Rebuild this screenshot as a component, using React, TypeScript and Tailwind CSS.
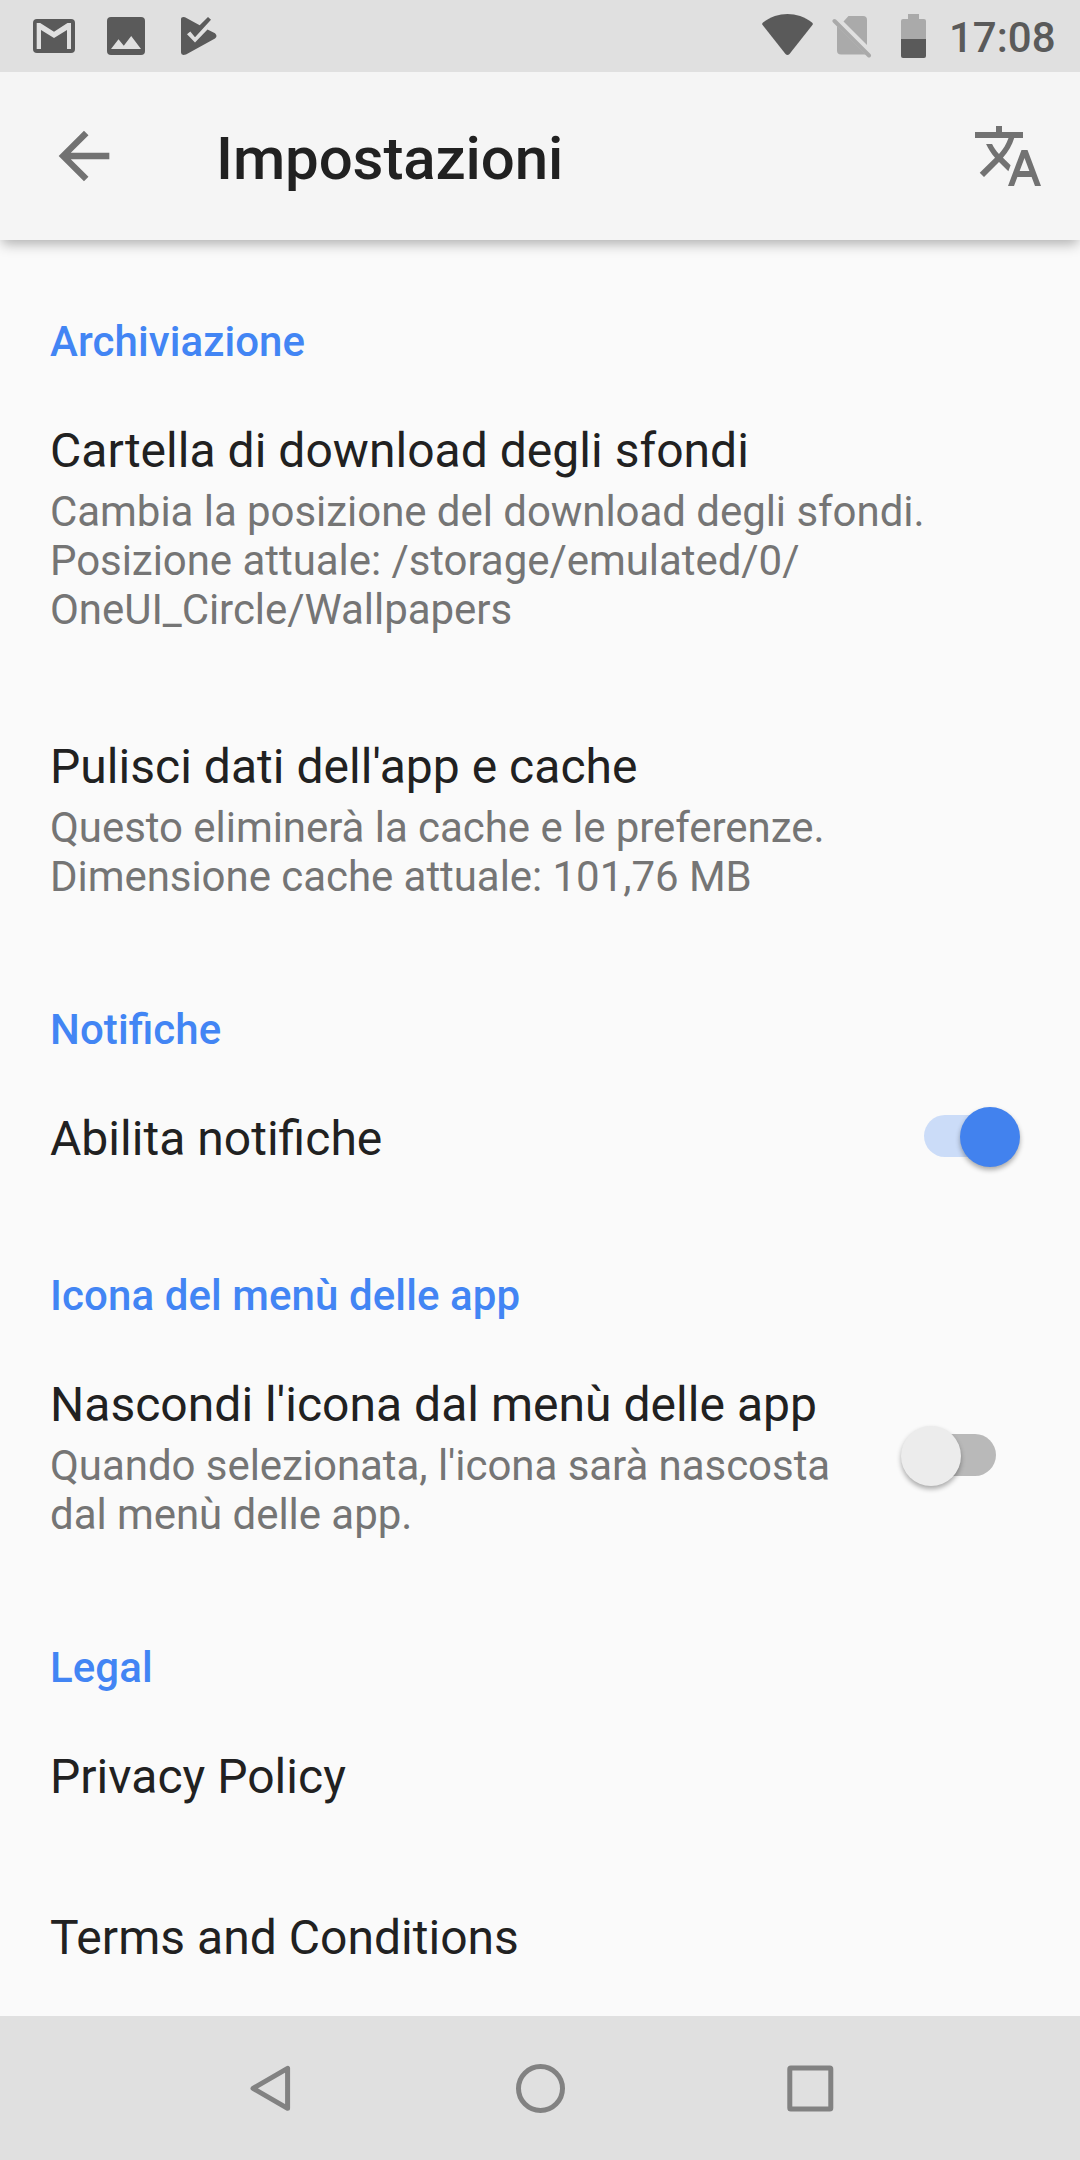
import React from 'react';

type Item = {
  title: string;
  summary?: string[];
  className: string;
  toggle?: 'on' | 'off';
};

type Section = {
  label: string;
  className: string;
  items: Item[];
};

const SECTIONS: Section[] = [
  {
    label: 'Archiviazione',
    className: 'pt-[77px]',
    items: [
      {
        title: 'Cartella di download degli sfondi',
        summary: [
          'Cambia la posizione del download degli sfondi.',
          'Posizione attuale: /storage/emulated/0/',
          'OneUI_Circle/Wallpapers',
        ],
        className: 'pt-14',
      },
      {
        title: "Pulisci dati dell'app e cache",
        summary: ['Questo eliminerà la cache e le preferenze.', 'Dimensione cache attuale: 101,76 MB'],
        className: 'pt-26',
      },
    ],
  },
  {
    label: 'Notifiche',
    className: 'pt-26',
    items: [{ title: 'Abilita notifiche', className: 'pt-14', toggle: 'on' }],
  },
  {
    label: 'Icona del menù delle app',
    className: 'pt-26',
    items: [
      {
        title: "Nascondi l'icona dal menù delle app",
        summary: ["Quando selezionata, l'icona sarà nascosta", 'dal menù delle app.'],
        className: 'pt-14',
        toggle: 'off',
      },
    ],
  },
  {
    label: 'Legal',
    className: 'pt-26',
    items: [
      { title: 'Privacy Policy', className: 'pt-14' },
      { title: 'Terms and Conditions', className: 'pt-26' },
    ],
  },
];

function StatusBar() {
  return (
    <div className="relative z-20 h-[72px] shrink-0 bg-[#e0e0e0] flex items-start">
      <svg className="ml-8 mt-[18px] w-[44px] h-[36px]" viewBox="0 0 44 36">
        <rect x="1" y="1" width="42" height="34" rx="4" fill="#5a5a5a" />
        <path d="M4.700 31V5h3.500L22 13.700 35.500 5H39v26h-4V12L22 20 9 12v19z" fill="#e0e0e0" />
      </svg>
      <svg className="ml-[30px] mt-[16px] w-[40px] h-[40px]" viewBox="0 0 40 40">
        <rect x="1" y="1" width="38" height="38" rx="4" fill="#5a5a5a" />
        <path d="M5 33l7.500-9.700 5.300 6.500L25.200 20 35 33z" fill="#e0e0e0" />
      </svg>
      <svg className="ml-[34px] mt-[16px] w-[40px] h-[40px]" viewBox="0 0 40 40">
        <path
          d="M1 3.500Q1 .5 5 1.200L19.700 9.200 28 1l3 2.800L15 21.200l-4.700-5.600L7 18.200 15 26.500 27.500 13.500 35 17.200Q38 20 35 22.500L6 38.500Q1 40 1 36.500z"
          fill="#5a5a5a"
        />
      </svg>

      <div className="flex-1" />

      <svg className="mt-[13px] w-[54px] h-[43px]" viewBox="0 0 54 43">
        <path
          d="M2 9.500C17-1.700 36-1.700 51 9.500q1.500 1.200.4 2.600L28.500 41q-2 2.200-4 0L1.600 12.100Q.5 10.700 2 9.500z"
          fill="#5a5a5a"
        />
      </svg>
      <svg className="ml-[17px] mt-[15px] w-[40px] h-[44px]" viewBox="0 0 40 44">
        <path d="M11.500 6.500L16.500 1H31q4 0 4 4v25z" fill="#aaa" />
        <path d="M5 11L33.500 39.500H9q-4 0-4-4z" fill="#aaa" />
        <path d="M2.500 6L37 40.500" stroke="#aaa" strokeWidth="4" strokeLinecap="round" />
      </svg>
      <svg className="ml-[28px] mt-[14px] w-[26px] h-[44px]" viewBox="0 0 26 44">
        <path d="M8 0h11v5h5q2 0 2 2v18H1V7q0-2 2-2h5z" fill="#aaa" />
        <path d="M1 25h25v17q0 2-2 2H3q-2 0-2-2z" fill="#5a5a5a" />
      </svg>
      <span className="ml-[23px] mr-6 mt-[13px] w-[107px] text-[42px] leading-[49px] font-medium text-[#5a5a5a]">
        17:08
      </span>
    </div>
  );
}

function AppBar() {
  return (
    <header className="relative z-10 h-[168px] shrink-0 bg-[#f5f5f5] flex items-center pl-[46px] pr-9 shadow-[0_6px_12px_-2px_rgba(0,0,0,0.3)]">
      <svg className="w-[76px] h-[76px]" viewBox="0 0 24 24" fill="#727272">
        <path d="M20 11H7.830l5.590-5.590L12 4l-8 8 8 8 1.410-1.410L7.830 13H20v-2z" />
      </svg>
      <h1 className="ml-[94px] pt-[5px] flex-1 text-[60px] leading-[71px] tracking-[-0.1px] font-medium text-[#212121]">
        Impostazioni
      </h1>
      <svg className="w-[72px] h-[72px]" viewBox="0 0 24 24" fill="#727272">
        <path d="M12.870 15.070l-2.540-2.510.03-.03c1.740-1.940 2.980-4.170 3.710-6.530H17V4h-7V2H8v2H1v1.990h11.170C11.500 7.920 10.440 9.750 9 11.350 8.070 10.320 7.300 9.190 6.690 8h-2c.73 1.630 1.730 3.170 2.980 4.560l-5.090 5.020L4 19l5-5 3.110 3.110.76-2.040zM18.500 10h-2L12 22h2l1.120-3h4.750L21 22h2l-4.500-12zm-2.620 7l1.620-4.330L19.120 17h-3.240z" />
      </svg>
    </header>
  );
}

function Toggle({ state }: { state: 'on' | 'off' }) {
  if (state === 'on') {
    return (
      <div className="mr-[60px] -mt-[10px] -mb-[5px] w-24 h-[60px] flex items-center">
        <div className="w-[72px] h-[42px] shrink-0 rounded-l-full bg-[#cbdcf8]" />
        <div className="mt-px -ml-[36px] w-[60px] h-[60px] shrink-0 rounded-full bg-[#4282ee] shadow-[0_3px_5px_rgba(0,0,0,0.32)]" />
      </div>
    );
  }
  return (
    <div className="mr-[84px] mb-[5px] w-24 h-[60px] flex items-center">
      <div className="relative z-[1] mt-px ml-px w-[60px] h-[60px] shrink-0 rounded-full bg-[#ececec] shadow-[0_3px_5px_rgba(0,0,0,0.32)]" />
      <div className="-ml-[25px] w-[60px] h-[42px] shrink-0 rounded-r-full bg-[#b9b9b9]" />
    </div>
  );
}

function Row({ item }: { item: Item }) {
  return (
    <div className={item.className}>
      <div className="flex items-center">
        <div className="flex-1">
          <p className="text-[48px] leading-[57px] tracking-[0.03px] text-[#212121]">{item.title}</p>
          {item.summary && (
            <div className="pt-2 text-[42px] leading-[49px] tracking-[-0.05px] text-[#757575]">
              {item.summary.map((line) => (
                <p key={line}>{line}</p>
              ))}
            </div>
          )}
        </div>
        {item.toggle && <Toggle state={item.toggle} />}
      </div>
    </div>
  );
}

function NavBar() {
  return (
    <nav className="h-[144px] shrink-0 bg-[#e0e0e0] flex items-center justify-center gap-[198px]">
      <svg className="w-[72px] h-[72px]" viewBox="0 0 72 72" fill="none" stroke="#828282" strokeWidth="5">
        <path d="M53.600 16.300v40L19 36.400z" strokeLinejoin="round" />
      </svg>
      <svg className="w-[72px] h-[72px]" viewBox="0 0 72 72" fill="none" stroke="#828282" strokeWidth="5">
        <circle cx="36.500" cy="36.500" r="22" />
      </svg>
      <svg className="w-[72px] h-[72px]" viewBox="0 0 72 72" fill="none" stroke="#828282" strokeWidth="5">
        <rect x="15.800" y="16" width="41" height="41" rx="1" />
      </svg>
    </nav>
  );
}

export default function App() {
  return (
    <div className="w-[1080px] h-[2160px] overflow-hidden bg-[#fafafa] flex flex-col font-['Roboto',sans-serif] [font-feature-settings:'liga'_1]">
      <StatusBar />
      <AppBar />
      <main className="flex-1 min-h-0 pl-[50px]">
        {SECTIONS.map((section) => (
          <section key={section.label} className={section.className}>
            <h2 className="text-[42px] leading-[49px] tracking-[0.09px] font-medium text-[#4285f4]">{section.label}</h2>
            {section.items.map((item) => (
              <Row key={item.title} item={item} />
            ))}
          </section>
        ))}
      </main>
      <NavBar />
    </div>
  );
}
